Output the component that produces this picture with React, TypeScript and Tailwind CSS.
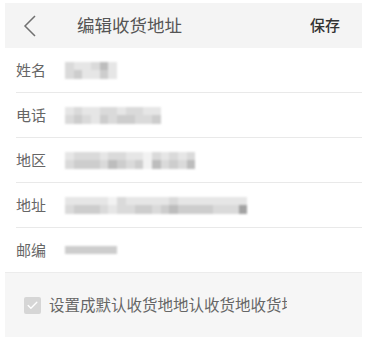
import { Check } from 'lucide-react'

// grey levels for the mosaic cells, lightest to darkest
const shades = [
  'bg-[#f2f2f2]',
  'bg-[#e6e6e6]',
  'bg-[#dadada]',
  'bg-[#cdcdcd]',
  'bg-[#bdbdbd]',
  'bg-[#a3a3a3]',
]

type Field = { label: string; cells: number[][] }

const fields: Field[] = [
  { label: '姓名', cells: [[2, 1, 1, 2, 4, 1], [2, 3, 1, 1, 3, 1]] },
  { label: '电话', cells: [[1, 2, 1, 1, 2, 2, 1, 2, 2, 1, 1], [2, 3, 2, 1, 3, 2, 3, 3, 2, 2, 3]] },
  { label: '地区', cells: [[1, 2, 2, 2, 1, 2, 2, 1, 1, 0, 2, 1, 2, 1, 2], [2, 3, 3, 3, 2, 4, 3, 2, 3, 0, 4, 2, 3, 2, 4]] },
  {
    label: '地址',
    cells: [
      [1, 1, 1, 1, 1, 0, 2, 1, 1, 1, 1, 1, 2, 1, 1, 1, 1, 1, 1, 1, 1],
      [2, 3, 3, 3, 2, 1, 2, 2, 3, 3, 2, 3, 4, 3, 3, 3, 3, 2, 2, 2, 5],
    ],
  },
  { label: '邮编', cells: [[3, 3, 3, 3, 3, 3]] },
]

function Mosaic({ cells }: { cells: number[][] }) {
  return (
    <div className="flex flex-col blur-[0.8px]">
      {cells.map((row, i) => (
        <div key={i} className="flex">
          {row.map((s, j) => (
            <div key={j} className={`w-[8.7px] h-[8.5px] ${shades[s]}`} />
          ))}
        </div>
      ))}
    </div>
  )
}

export default function App() {
  return (
    <div
      className="w-[370px] h-[338px] bg-white pt-[3px] pl-[5px] pr-[8px] overflow-hidden"
      style={{ fontFamily: '"Noto Sans CJK SC", "Noto Sans", sans-serif' }}
    >
      <div className="h-[45px] bg-[#f4f4f4] flex items-center">
        <svg width="14" height="22" viewBox="0 0 14 22" className="ml-[18px]">
          <polyline points="12,1 2,11 12,21" fill="none" stroke="#707070" strokeWidth="1.5" />
        </svg>
        <span className="ml-[40px] text-[17.5px] text-[#555]">编辑收货地址</span>
        <span className="ml-auto mr-[22px] text-[15px] text-[#333] font-medium">保存</span>
      </div>

      {fields.map((f, i) => (
        <div key={f.label}>
          <div className="h-[44px] flex items-center pl-[11px]">
            <span className="w-[49px] text-[15px] text-[#666]">{f.label}</span>
            <Mosaic cells={f.cells} />
          </div>
          {i < fields.length - 1 && <div className="ml-[11px] h-px bg-[#e9e9e9]" />}
        </div>
      ))}

      <div className="h-px bg-[#ececec]" />
      <div className="h-[64px] bg-[#f6f6f6] flex items-center pl-[19px]">
        <div className="w-[17px] h-[17px] rounded-[2px] bg-[#d6d6d6] flex items-center justify-center">
          <Check className="w-[13px] h-[13px] text-white" strokeWidth={2.5} />
        </div>
        <div className="ml-[8px] w-[238px] overflow-hidden whitespace-nowrap text-[15.5px] text-[#666]">
          设置成默认收货地地认收货地收货地
        </div>
      </div>
    </div>
  )
}
